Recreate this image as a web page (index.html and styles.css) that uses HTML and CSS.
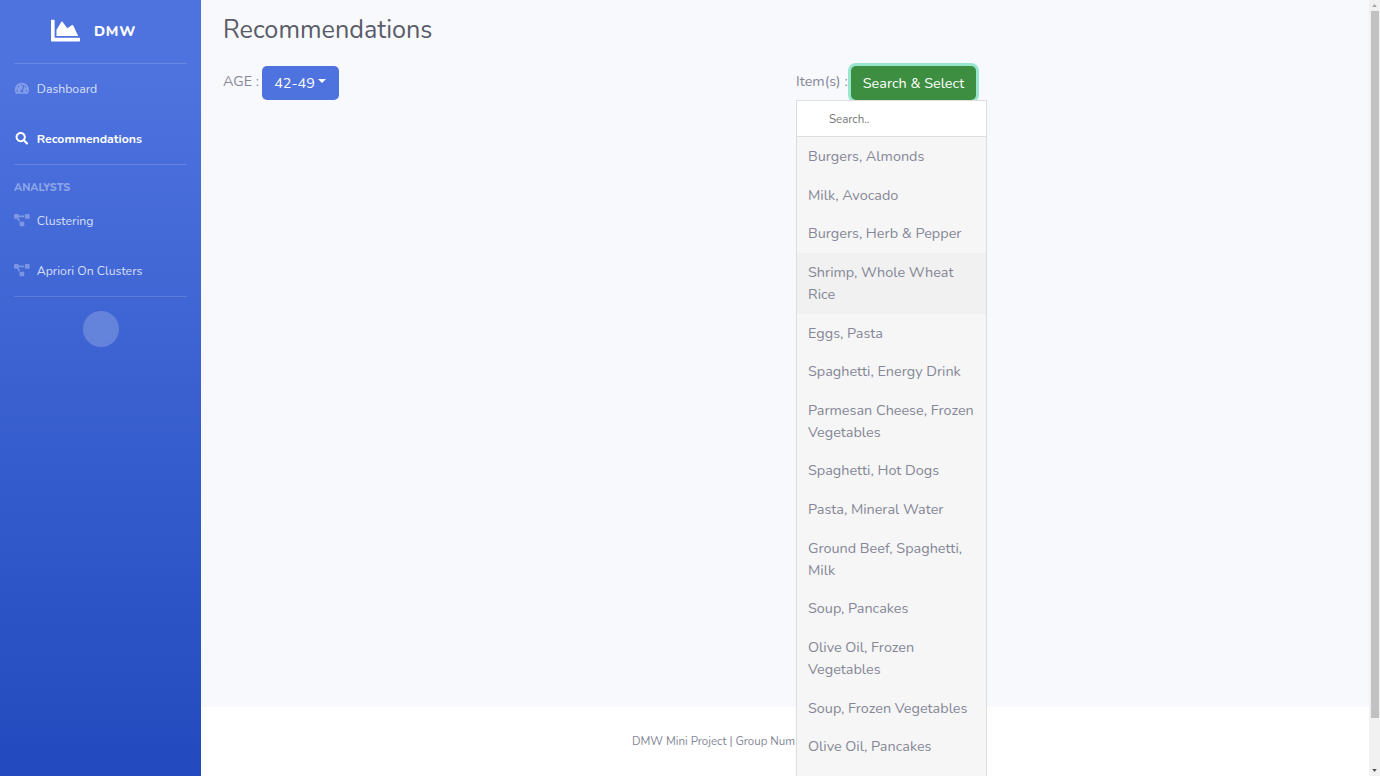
FILE: index.html
```html
<!DOCTYPE html>
<html lang="en">
<head>
<meta charset="utf-8">
<title>Recommendations</title>
<link rel="stylesheet" href="styles.css">
</head>
<body>
<svg class="defs" aria-hidden="true">
  <symbol id="diagram" viewBox="0 0 640 512"><path d="M384 320H256c-17.67 0-32 14.33-32 32v128c0 17.67 14.33 32 32 32h128c17.67 0 32-14.33 32-32V352c0-17.67-14.33-32-32-32zM192 32c0-17.67-14.33-32-32-32H32C14.33 0 0 14.33 0 32v128c0 17.67 14.33 32 32 32h95.72l73.16 128.04C211.98 300.98 232.4 288 256 288h.28L192 175.51V128h224V64H192V32zM608 0H480c-17.67 0-32 14.33-32 32v128c0 17.67 14.33 32 32 32h128c17.67 0 32-14.33 32-32V32c0-17.67-14.33-32-32-32z"/></symbol>
</svg>
<div class="page">
  <nav class="sidebar">
    <a class="brand">
      <svg class="brand-icon" viewBox="0 0 512 512"><path d="M500 384c6.6 0 12 5.4 12 12v40c0 6.6-5.4 12-12 12H12c-6.6 0-12-5.4-12-12V76c0-6.6 5.4-12 12-12h40c6.6 0 12 5.4 12 12v308h436zM372.7 159.5L288 216l-85.3-113.7c-5.1-6.8-15.5-6.3-19.9 1L96 248v104h384l-89.9-187.8c-3.2-6.5-11.4-8.7-17.4-4.7z"/></svg>
      <span class="brand-text">DMW</span>
    </a>
    <hr class="divider">
    <a class="nav-link">
      <svg class="nav-icon" viewBox="0 0 576 512"><path d="M288 32C128.94 32 0 160.94 0 320c0 52.8 14.25 102.26 39.06 144.8 5.61 9.62 16.3 15.2 27.44 15.2h443c11.14 0 21.83-5.58 27.44-15.2C561.75 422.26 576 372.8 576 320c0-159.06-128.94-288-288-288zm0 64c14.71 0 26.58 10.13 30.32 23.65-1.11 2.26-2.64 4.23-3.45 6.67l-9.22 27.67c-5.13 3.49-10.97 6.01-17.64 6.01-17.67 0-32-14.33-32-32S270.33 96 288 96zM96 384c-17.67 0-32-14.33-32-32s14.33-32 32-32 32 14.33 32 32-14.33 32-32 32zm48-160c-17.67 0-32-14.33-32-32s14.33-32 32-32 32 14.33 32 32-14.33 32-32 32zm246.77-72.41l-61.33 184C343.13 347.33 352 364.54 352 384c0 11.72-3.38 22.55-8.88 32H232.88c-5.5-9.45-8.88-20.28-8.88-32 0-33.94 26.5-61.43 59.9-63.59l61.34-184.01c4.17-12.56 17.73-19.45 30.36-15.17 12.57 4.19 19.35 17.79 15.17 30.36zm14.66 57.2l15.52-46.55c3.47-1.29 7.13-2.23 11.05-2.23 17.67 0 32 14.33 32 32s-14.33 32-32 32c-11.38-.01-20.89-6.28-26.57-15.22zM480 384c-17.67 0-32-14.33-32-32s14.33-32 32-32 32 14.33 32 32-14.33 32-32 32z"/></svg>
      <span class="nav-text">Dashboard</span>
    </a>
    <a class="nav-link active">
      <svg class="nav-icon" viewBox="0 0 512 512"><path d="M505 442.7L405.3 343c-4.5-4.5-10.6-7-17-7H372c27.6-35.3 44-79.7 44-128C416 93.1 322.9 0 208 0S0 93.1 0 208s93.1 208 208 208c48.3 0 92.7-16.4 128-44v16.3c0 6.4 2.5 12.5 7 17l99.7 99.7c9.4 9.4 24.6 9.4 33.9 0l28.3-28.3c9.4-9.4 9.4-24.6.1-34zM208 336c-70.7 0-128-57.2-128-128 0-70.7 57.2-128 128-128 70.7 0 128 57.2 128 128 0 70.7-57.2 128-128 128z"/></svg>
      <span class="nav-text">Recommendations</span>
    </a>
    <hr class="divider">
    <div class="heading">ANALYSTS</div>
    <a class="nav-link"><svg class="nav-icon"><use href="#diagram"/></svg><span class="nav-text">Clustering</span></a>
    <a class="nav-link"><svg class="nav-icon"><use href="#diagram"/></svg><span class="nav-text">Apriori On Clusters</span></a>
    <hr class="divider">
    <button class="toggle" aria-label="Toggle sidebar"></button>
  </nav>
  <div class="content">
    <main class="main">
      <h1 class="title">Recommendations</h1>
      <div class="filters">
        <div class="filter">
          <span class="label label-age">AGE :</span>
          <button class="btn btn-age">42-49<i class="caret"></i></button>
        </div>
        <div class="filter">
          <span class="label label-items">Item(s) :</span>
          <button class="btn btn-search">Search &amp; Select</button>
          <div class="menu">
            <input class="search" type="text" placeholder="Search..">
            <a class="item">Burgers, Almonds</a>
            <a class="item">Milk, Avocado</a>
            <a class="item">Burgers, Herb &amp; Pepper</a>
            <a class="item hover">Shrimp, Whole Wheat<br>Rice</a>
            <a class="item">Eggs, Pasta</a>
            <a class="item">Spaghetti, Energy Drink</a>
            <a class="item">Parmesan Cheese, Frozen<br>Vegetables</a>
            <a class="item">Spaghetti, Hot Dogs</a>
            <a class="item">Pasta, Mineral Water</a>
            <a class="item">Ground Beef, Spaghetti,<br>Milk</a>
            <a class="item">Soup, Pancakes</a>
            <a class="item">Olive Oil, Frozen<br>Vegetables</a>
            <a class="item">Soup, Frozen Vegetables</a>
            <a class="item">Olive Oil, Pancakes</a>
            <a class="item">&nbsp;</a>
          </div>
        </div>
      </div>
    </main>
    <footer class="footer">DMW Mini Project | Group Num</footer>
  </div>
  <div class="scrollbar">
    <svg class="arrow arrow-up" viewBox="0 0 6 4"><path d="M3 0l3 4H0z"/></svg>
    <div class="thumb"></div>
    <svg class="arrow" viewBox="0 0 6 4"><path d="M0 0h6L3 4z"/></svg>
  </div>
</div>
</body>
</html>
```
FILE: styles.css
```css
* { box-sizing: border-box; }
body {
  margin: 0;
  height: 776px;
  overflow: hidden;
  font-family: Nunito, Lato, sans-serif;
  font-size: 14.4px;
  line-height: 21.6px;
  color: #858796;
}
button, input { font-family: inherit; margin: 0; }
.defs { position: absolute; width: 0; height: 0; }
.page { display: flex; height: 776px; overflow: hidden; }

.sidebar {
  flex: none;
  width: 201px;
  background: linear-gradient(180deg, #4e73df 10%, #224abe 100%);
  display: flex;
  flex-direction: column;
}
.brand {
  display: flex;
  align-items: center;
  height: 63px;
  padding: 0 0 3px 51px;
  gap: 14px;
  color: #fff;
}
.brand-icon { width: 29px; height: 29px; fill: #fff; }
.brand-text { font-size: 14.4px; font-weight: 800; letter-spacing: 0.7px; padding-top: 3px; }
.divider {
  flex: none;
  width: 173px;
  height: 1px;
  margin: 0 14px;
  border: 0;
  background: rgba(255, 255, 255, 0.15);
}
.nav-link {
  display: flex;
  align-items: center;
  height: 50px;
  padding: 0 14px;
  gap: 7px;
  font-size: 12.25px;
  color: rgba(255, 255, 255, 0.8);
}
.nav-icon { width: 15.8px; height: 12.6px; margin-bottom: 1px; fill: rgba(255, 255, 255, 0.3); }
.nav-text { padding-top: 1px; }
.active { color: #fff; font-weight: 700; }
.active .nav-icon { fill: #fff; }
.heading {
  height: 31px;
  padding: 13px 14px 0;
  font-size: 10.8px;
  font-weight: 800;
  line-height: 20px;
  color: rgba(255, 255, 255, 0.4);
}
.toggle {
  width: 36px;
  height: 36px;
  margin: 14px auto 0;
  border: 0;
  border-radius: 50%;
  background: rgba(255, 255, 255, 0.2);
}

.content { flex: 1; display: flex; flex-direction: column; }
.main { height: 707px; padding: 0 22px; background: #f8f9fc; }
.title {
  margin: 0;
  padding-top: 15px;
  height: 66px;
  font-size: 25.2px;
  line-height: 30px;
  font-weight: 400;
  color: #5a5c69;
}
.filters { display: grid; grid-template-columns: 573px 1fr; }
.filter { position: relative; display: flex; }
.label { flex: none; line-height: 30px; white-space: nowrap; }
.label-age { width: 39px; }
.label-items { width: 55px; }
.btn {
  height: 34px;
  padding: 0;
  border: 0;
  border-radius: 5px;
  font-size: 14.4px;
  line-height: 34px;
  color: #fff;
}
.btn-age {
  display: flex;
  align-items: center;
  justify-content: center;
  gap: 3.5px;
  width: 76.5px;
  background: #4e73df;
}
.caret {
  border-top: 4.5px solid #fff;
  border-left: 4.5px solid transparent;
  border-right: 4.5px solid transparent;
  margin-top: -4px;
}
.btn-search { width: 125px; background: #3e8e41; box-shadow: 0 0 0 3px #98e6cd; }
.menu {
  position: absolute;
  top: 34px;
  left: 0;
  width: 191px;
  border: 1px solid #ddd;
  background: #f6f6f6;
}
.search {
  display: block;
  width: 100%;
  height: 36px;
  padding: 0 0 0 32px;
  border: 0;
  border-bottom: 1px solid #ddd;
  background: #fff;
  font-size: 11.5px;
}
.search::placeholder { color: #757575; }
.item { display: block; padding: 8.8px 0 8.4px 11px; white-space: nowrap; }
.hover { background: #f1f1f1; }
.footer {
  height: 69px;
  padding-left: 431px;
  background: #fff;
  font-size: 11.5px;
  line-height: 69px;
}
.scrollbar {
  flex: none;
  width: 11px;
  display: flex;
  flex-direction: column;
  align-items: center;
  padding: 4px 0;
  background: #f1f1f1;
}
.arrow { width: 5px; height: 3px; fill: #505050; }
.arrow-up { fill: #a3a3a3; }
.thumb { width: 8px; height: 707px; margin: 4px 0 51px; background: #c1c1c1; }
```
